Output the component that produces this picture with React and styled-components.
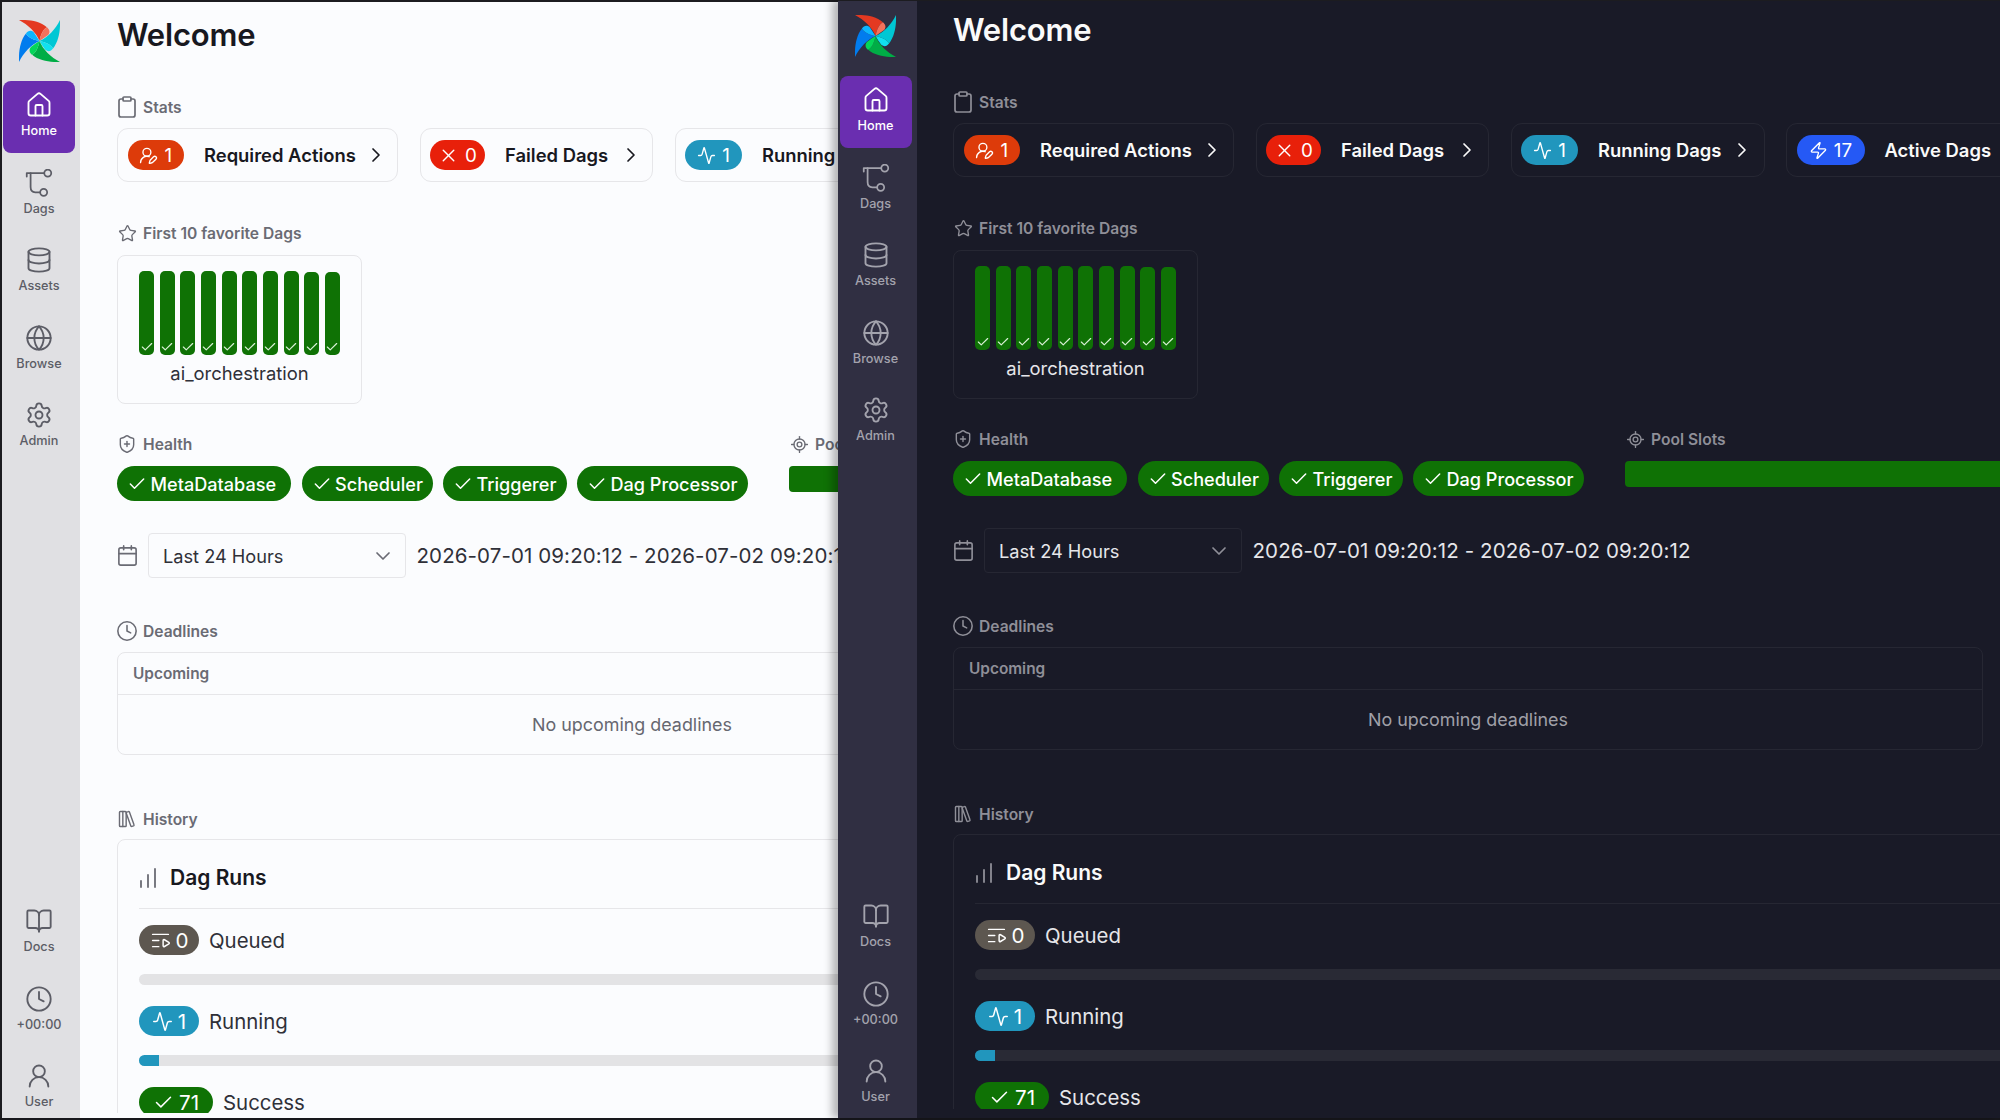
import React from "react";
import styled, { createGlobalStyle } from "styled-components";
import {
  House, Database, Globe, Settings, BookOpen, Clock, UserRound, Clipboard, Star, ShieldPlus,
  LocateFixed, Calendar, LibraryBig, ChartNoAxesColumnIncreasing, Check, X, ChevronRight,
  ChevronDown, UserRoundPen, ListVideo, Activity, Zap,
} from "lucide-react";

const Global = createGlobalStyle`
  html, body { margin: 0; padding: 0; background: #17171c; }
  body { font-family: Inter, "Liberation Sans", sans-serif; }
  * { box-sizing: border-box; }
`;

const light = {
  main: "#fbfcfe", side: "#e0e0e3", text: "#18181f", muted: "#6a6b74", sideText: "#5c5d66",
  border: "#e6e6e9", body: "#2f3038", track: "#e3e3e5", empty: "#666770", top: 2, lift: 0,
};
const dark = {
  main: "#191a27", side: "#302f42", text: "#fafafa", muted: "#8f8f98", sideText: "#a3a3ad",
  border: "#262733", body: "#e6e6ea", track: "#292a35", empty: "#a0a0a8", top: 1, lift: 5,
};

const Screen = styled.div`
  width: 2000px; height: 1120px; display: flex; overflow: hidden;
  background: #17171c; padding: 0 0 2px 0;
`;
const Pane = styled.div`
  flex: ${(p) => (p.$t.lift ? "1 1 0" : "0 0 838px")};
  min-width: 0; display: flex; overflow: hidden;
  padding-top: ${(p) => p.$t.top}px;
  padding-left: ${(p) => (p.$t.lift ? 0 : 2)}px;
  background: #1c1c20;
  position: relative;
  z-index: ${(p) => (p.$t.lift ? 1 : 0)};
  box-shadow: ${(p) => (p.$t.lift ? "-6px 0 8px rgba(0,0,0,0.28)" : "none")};
`;
const Sidebar = styled.nav`
  flex: 0 0 ${(p) => (p.$t.lift ? 79 : 78)}px;
  background: ${(p) => p.$t.side}; overflow: hidden;
  display: flex; flex-direction: column; align-items: center;
  padding: ${(p) => (p.$t.lift ? 14 : 18)}px 4px 0 0;
`;
const LogoBox = styled.svg`
  width: 41px; height: 42px; flex: none; margin-bottom: 19px;
`;
const NavItem = styled.div`
  width: 72px; height: 72px; flex: none; border-radius: 8px;
  margin-bottom: 5.6px; display: flex; flex-direction: column; align-items: center;
  padding-top: 10px; gap: 3px;
  background: ${(p) => (p.$active ? "#6a2eb0" : "transparent")};
  color: ${(p) => (p.$active ? "#fff" : p.$t.sideText)};
  font-size: 12.7px; font-weight: 500; line-height: 18px;
  svg { flex: none; }
`;
const NavBottom = styled.div`
  margin-top: auto; margin-bottom: ${(p) => (p.$t.lift ? -7 : -12)}px; display: flex; flex-direction: column;
`;
const Main = styled.main`
  flex: 1 1 0; min-width: 0; background: ${(p) => p.$t.main};
  overflow: hidden; padding-bottom: ${(p) => (p.$t.lift ? 9 : 5)}px;
  display: flex;
`;
const Scroll = styled.div`
  flex: 1 1 0; min-width: 0; overflow: hidden;
  padding: ${(p) => (p.$t.lift ? 9 : 13)}px 0 0 ${(p) => (p.$t.lift ? 36 : 37)}px;
`;
const Title = styled.h1`
  margin: 0; font-size: 31px; line-height: 40px; font-weight: 600; color: ${(p) => p.$t.text};
  letter-spacing: -0.2px;
`;
const SectionHead = styled.div`
  height: 20px; display: flex; align-items: center; gap: 6px;
  margin-top: ${(p) => p.$gap}px;
  color: ${(p) => p.$t.muted}; font-size: 15.6px; font-weight: 600; white-space: nowrap;
`;
const IconSlot = styled.span`
  width: 20px; height: 20px; flex: none; display: flex; align-items: center; justify-content: center;
  svg { flex: none; }
`;
const StatsRow = styled.div`
  display: flex; gap: 21.5px; margin-top: 11px; width: 1400px;
`;
const StatCard = styled.div`
  height: 54px; width: ${(p) => p.$w}px; flex: none; display: flex; align-items: center; padding: 0 9.5px;
  border: 1.5px solid ${(p) => p.$t.border}; border-radius: 11px;
  color: ${(p) => p.$t.text}; font-size: 18.4px; font-weight: 600; white-space: nowrap;
`;
const Count = styled.span`
  height: 30px; width: ${(p) => p.$w}px; flex: none; border-radius: 15px;
  display: inline-flex; align-items: center; justify-content: center; gap: 6px;
  background: ${(p) => p.$bg}; color: #fff; font-size: 18.8px; font-weight: 400;
  svg { flex: none; }
`;
const StatName = styled.span`
  margin: 0 auto 0 20px;
`;
const FavCard = styled.div`
  width: 245px; height: 149px; margin-top: 12px; padding: 15px 21px 0;
  border: 1.5px solid ${(p) => p.$t.border}; border-radius: 8px;
  display: flex; flex-direction: column; align-items: stretch;
`;
const Bars = styled.div`
  height: 84px; display: flex; justify-content: space-between; align-items: flex-end;
`;
const Bar = styled.div`
  width: 15px; height: ${(p) => p.$h}px; background: #0f7205; border-radius: 5px;
  display: flex; justify-content: center; align-items: flex-end; color: #d9f0d6;
  svg { width: 14px; height: 14px; stroke-width: 2; margin-bottom: 1px; }
`;
const DagName = styled.div`
  margin-top: 5px; text-align: center; font-size: 18.4px; line-height: 26px;
  color: ${(p) => p.$t.body}; white-space: nowrap;
`;
const HealthRow = styled.div`
  display: flex; width: 1400px;
`;
const HealthCol = styled.div`
  flex: none; width: ${(p) => p.$w}px;
`;
const Pills = styled.div`
  display: flex; gap: 10.5px; margin-top: 12px;
`;
const HealthPill = styled.div`
  height: 35px; flex: none; width: ${(p) => p.$w}px; padding: 0 10px; border-radius: 18px;
  display: flex; align-items: center; gap: 3.5px;
  background: #0f7205; color: #fff; font-size: 18.1px; font-weight: 500; white-space: nowrap;
  svg { width: 20px; height: 20px; stroke-width: 1.8; flex: none; }
`;
const PoolBar = styled.div`
  height: 26px; margin-top: 12px; border-radius: 4px 0 0 4px; background: #0f7205;
`;
const DateRow = styled.div`
  display: flex; align-items: center; height: 45px; margin-top: 32px; white-space: nowrap;
  width: 1400px; color: ${(p) => p.$t.body};
  > span:first-child { color: ${(p) => p.$t.muted}; margin-right: 11px; }
`;
const Select = styled.div`
  width: 258px; height: 45px; flex: none; margin-right: 10.5px; padding: 0 10px 0 14px;
  border: 1.5px solid ${(p) => p.$t.border}; border-radius: 4px; display: flex; align-items: center; justify-content: space-between;
  font-size: 18.2px; color: ${(p) => p.$t.body};
  svg { color: ${(p) => p.$t.muted}; }
`;
const DateText = styled.span`
  font-size: 20.5px; letter-spacing: 0.1px;
`;
const DeadlineCard = styled.div`
  width: 1030px; height: 103px; margin-top: 11px; display: flex; flex-direction: column;
  border: 1.5px solid ${(p) => p.$t.border}; border-radius: 8px;
`;
const DeadlineHead = styled.div`
  height: 42px; flex: none; padding: 0 15px; display: flex; align-items: center;
  border-bottom: 1.5px solid ${(p) => p.$t.border};
  color: ${(p) => p.$t.muted}; font-size: 15.4px; font-weight: 600;
`;
const DeadlineEmpty = styled.div`
  flex: 1; display: flex; align-items: center; justify-content: center;
  color: ${(p) => p.$t.empty}; font-size: 17.9px;
`;
const HistoryCard = styled.div`
  width: 1500px; margin-top: 10px; padding: 0 21px; min-height: 340px;
  border: 1.5px solid ${(p) => p.$t.border}; border-radius: 8px;
`;
const HistoryHead = styled.div`
  height: 69px; padding: 28px 0 21px 0; display: flex; align-items: center; gap: 10px;
  border-bottom: 1.5px solid ${(p) => p.$t.border};
  color: ${(p) => p.$t.text}; font-size: 21px; font-weight: 600; white-space: nowrap;
  svg { color: ${(p) => p.$t.muted}; margin-left: -3px; flex: none; }
`;
const RunRow = styled.div`
  display: flex; align-items: center; gap: 10px; margin-top: ${(p) => p.$gap}px;
  color: ${(p) => p.$t.body}; font-size: 20.4px;
`;
const RunCount = styled(Count)`
  gap: 5px; font-size: 20.6px;
`;
const Track = styled.div`
  height: 11px; margin-top: 19px; border-radius: 6px; overflow: hidden; background: ${(p) => p.$t.track};
  width: 1458px;
`;
const Fill = styled.div`
  height: 100%; background: #2196bd;
`;

const DagsIcon = () => (
  <svg width="28" height="28" viewBox="0 0 24 24" fill="none" stroke="currentColor" strokeWidth="1.5" strokeLinecap="round" strokeLinejoin="round">
    <path d="M1.5 6.5V3.5h15" />
    <path d="M4.8 3.5V15.5c0 3 1.2 4.5 4 4.5H13" />
    <circle cx="19.5" cy="3.5" r="3" />
    <circle cx="16" cy="20" r="3" />
  </svg>
);

const BLADES = [
  { rot: 0, main: "#e43921", hi: "#f4725b" },
  { rot: 90, main: "#00c7d4", hi: "#11e1ee" },
  { rot: 180, main: "#00ad46", hi: "#04d659" },
  { rot: 270, main: "#017cee", hi: "#0cb6ff" },
];
const Logo = () => (
  <LogoBox viewBox="0 0 100 100" preserveAspectRatio="none">
    {BLADES.map((b) => (
      <g key={b.rot} transform={`rotate(${b.rot} 50 50)`}>
        <path d="M0 0C22 -1 50 2 68 17C58 22 52 38 50 50C42 30 22 11 0 0Z" fill={b.main} />
        <path d="M68 17C74 22 77 28 71 36C64 41 57 46 50 50C52 38 58 22 68 17Z" fill={b.hi} />
      </g>
    ))}
  </LogoBox>
);

const nav = { size: 28, strokeWidth: 1.6 };
const pill = { size: 19, strokeWidth: 1.7 };
const run = { size: 21, strokeWidth: 1.7 };
const head = { strokeWidth: 1.7 };

const TOP_NAV = [
  ["Home", <House key="i" {...nav} />],
  ["Dags", <DagsIcon key="i" />],
  ["Assets", <Database key="i" {...nav} />],
  ["Browse", <Globe key="i" {...nav} />],
  ["Admin", <Settings key="i" {...nav} />],
];
const BOTTOM_NAV = [
  ["Docs", <BookOpen key="i" {...nav} />],
  ["+00:00", <Clock key="i" {...nav} />],
  ["User", <UserRound key="i" {...nav} />],
];
const STATS = [
  ["Required Actions", "#dd3b0a", <UserRoundPen key="i" {...pill} />, "1", 56.5, 281],
  ["Failed Dags", "#e8200a", <X key="i" size={21} strokeWidth={1.6} />, "0", 55, 233.5],
  ["Running Dags", "#2196bd", <Activity key="i" {...pill} />, "1", 57, 254],
  ["Active Dags", "#2559f5", <Zap key="i" {...pill} />, "17", 68, 254],
];
const HEALTH = [["MetaDatabase", 174], ["Scheduler", 131], ["Triggerer", 123.5], ["Dag Processor", 171]];
const BAR_H = [84, 84, 84, 84, 84, 84, 84, 84, 83, 83];

const Window = ({ t }) => (
  <Pane $t={t}>
    <Sidebar $t={t}>
      <Logo />
      {TOP_NAV.map(([label, icon], i) => (
        <NavItem key={label} $t={t} $active={i === 0}>{icon}{label}</NavItem>
      ))}
      <NavBottom $t={t}>
        {BOTTOM_NAV.map(([label, icon]) => (
          <NavItem key={label} $t={t}>{icon}{label}</NavItem>
        ))}
      </NavBottom>
    </Sidebar>
    <Main $t={t}>
      <Scroll $t={t}>
        <Title $t={t}>Welcome</Title>
        <SectionHead $t={t} $gap={42}><IconSlot><Clipboard size={24} {...head} /></IconSlot>Stats</SectionHead>
        <StatsRow>
          {STATS.map(([name, bg, icon, n, w, cardW]) => (
            <StatCard key={name} $t={t} $w={cardW}>
              <Count $bg={bg} $w={w}>{icon}{n}</Count>
              <StatName>{name}</StatName>
              <ChevronRight size={24} strokeWidth={1.7} />
            </StatCard>
          ))}
        </StatsRow>
        <SectionHead $t={t} $gap={41}><IconSlot><Star size={19} {...head} /></IconSlot>First 10 favorite Dags</SectionHead>
        <FavCard $t={t}>
          <Bars>
            {BAR_H.map((h, i) => <Bar key={i} $h={h}><Check /></Bar>)}
          </Bars>
          <DagName $t={t}>ai_orchestration</DagName>
        </FavCard>
        <HealthRow>
          <HealthCol $w={672}>
            <SectionHead $t={t} $gap={30}><IconSlot><ShieldPlus size={20} {...head} /></IconSlot>Health</SectionHead>
            <Pills>
              {HEALTH.map(([h, w]) => <HealthPill key={h} $w={w}><Check />{h}</HealthPill>)}
            </Pills>
          </HealthCol>
          <HealthCol $w={400}>
            <SectionHead $t={t} $gap={30}><IconSlot><LocateFixed size={19} {...head} /></IconSlot>Pool Slots</SectionHead>
            <PoolBar />
          </HealthCol>
        </HealthRow>
        <DateRow $t={t}>
          <IconSlot><Calendar size={23} {...head} /></IconSlot>
          <Select $t={t}>Last 24 Hours<ChevronDown size={24} strokeWidth={1.7} /></Select>
          <DateText>2026-07-01 09:20:12 - 2026-07-02 09:20:12</DateText>
        </DateRow>
        <SectionHead $t={t} $gap={43}><IconSlot><Clock size={22} {...head} /></IconSlot>Deadlines</SectionHead>
        <DeadlineCard $t={t}>
          <DeadlineHead $t={t}>Upcoming</DeadlineHead>
          <DeadlineEmpty $t={t}>No upcoming deadlines</DeadlineEmpty>
        </DeadlineCard>
        <SectionHead $t={t} $gap={54}><IconSlot><LibraryBig size={20} {...head} /></IconSlot>History</SectionHead>
        <HistoryCard $t={t}>
          <HistoryHead $t={t}><ChartNoAxesColumnIncreasing size={24} strokeWidth={1.8} />Dag Runs</HistoryHead>
          <RunRow $t={t} $gap={16}><RunCount $bg="#5d5750" $w={60}><ListVideo {...run} />0</RunCount>Queued</RunRow>
          <Track $t={t} />
          <RunRow $t={t} $gap={21}><RunCount $bg="#2196bd" $w={60}><Activity {...run} />1</RunCount>Running</RunRow>
          <Track $t={t}><Fill style={{ width: `${(1 / 72) * 100}%` }} /></Track>
          <RunRow $t={t} $gap={21}><RunCount $bg="#0f7205" $w={74}><Check {...run} />71</RunCount>Success</RunRow>
        </HistoryCard>
      </Scroll>
    </Main>
  </Pane>
);

export default function App() {
  return (
    <>
      <Global />
      <Screen>
        <Window t={light} />
        <Window t={dark} />
      </Screen>
    </>
  );
}
